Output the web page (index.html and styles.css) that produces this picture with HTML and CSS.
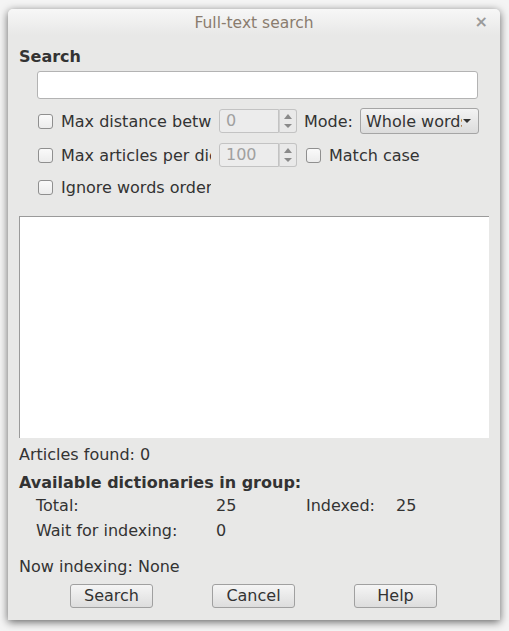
FILE: index.html
```html
<!DOCTYPE html>
<html>
<head>
<meta charset="utf-8">
<link rel="stylesheet" href="styles.css">
</head>
<body>
<div class="window">
  <div class="titlebar">
    <span class="title">Full-text search</span>
    <span class="close">×</span>
  </div>
  <div class="content">
    <div class="heading">Search</div>
    <div class="search-input"></div>
    <div class="options">
      <label class="check"><span class="box"></span><span class="clip">Max distance between words</span></label>
      <div class="spin"><span class="spin-field">0</span><span class="spin-arrows"><span class="up"></span><span class="down"></span></span></div>
      <div class="mode"><span>Mode:</span><span class="combo"><span class="combo-text">Whole words</span><span class="caret"></span></span></div>

      <label class="check"><span class="box"></span><span class="clip">Max articles per dictionary</span></label>
      <div class="spin"><span class="spin-field">100</span><span class="spin-arrows"><span class="up"></span><span class="down"></span></span></div>
      <label class="check match"><span class="box"></span><span>Match case</span></label>

      <label class="check"><span class="box"></span><span class="clip">Ignore words order</span></label>
    </div>
    <div class="results"></div>
    <div class="line found">Articles found: 0</div>
    <div class="line heading2">Available dictionaries in group:</div>
    <div class="stats">
      <span>Total:</span><span>25</span><span>Indexed:</span><span>25</span>
      <span>Wait for indexing:</span><span>0</span><span></span><span></span>
    </div>
    <div class="line now">Now indexing: None</div>
    <div class="buttons">
      <button class="btn">Search</button>
      <button class="btn">Cancel</button>
      <button class="btn">Help</button>
    </div>
  </div>
</div>
</body>
</html>
```
FILE: styles.css
```css
html, body {
  margin: 0;
  padding: 0;
  background: #f4f4f4;
}
body {
  width: 509px;
  height: 631px;
  overflow: hidden;
  font-family: "DejaVu Sans", sans-serif;
  font-size: 16px;
  color: #333333;
}
.window {
  margin: 9px 0 0 8px;
  width: 492px;
  height: 611px;
  background: #e8e8e7;
  border-radius: 5px 5px 0 0;
  box-shadow: 0 2px 9px rgba(0, 0, 0, 0.6);
  display: flex;
  flex-direction: column;
}
.titlebar {
  height: 26px;
  border-radius: 5px 5px 0 0;
  background: linear-gradient(#f7f7f7, #e8e8e7);
  display: flex;
  align-items: center;
  justify-content: center;
  position: relative;
}
.title {
  color: #8a7c6e;
  font-size: 15.5px;
  padding-top: 1px;
}
.close {
  position: absolute;
  right: 12px;
  top: 3px;
  font-size: 16px;
  font-weight: bold;
  color: #9a9a9a;
}
.content {
  padding: 0 11px;
  display: flex;
  flex-direction: column;
}
.heading {
  font-weight: bold;
  height: 20px;
  line-height: 20px;
  margin-top: 12px;
}
.search-input {
  margin: 4px 11px 0 18px;
  height: 26px;
  background: #fff;
  border: 1px solid #b3b3b3;
  border-radius: 3px;
}
.options {
  display: grid;
  grid-template-columns: 174px 78px auto;
  column-gap: 8px;
  row-gap: 8px;
  grid-template-rows: 26px 26px 22px;
  margin: 9px 0 0 18px;
  align-items: center;
}
.check {
  display: flex;
  align-items: center;
  gap: 8px;
  white-space: nowrap;
  overflow: hidden;
  height: 26px;
}
.box {
  flex: none;
  width: 13px;
  height: 13px;
  margin-left: 1px;
  border: 1px solid #8f8f8f;
  border-radius: 3px;
  background: linear-gradient(#fafafa, #ececec);
}
.clip {
  overflow: hidden;
  white-space: nowrap;
}
.spin {
  display: flex;
  height: 24px;
}
.spin-field {
  width: 52px;
  border: 1px solid #c3c3c3;
  border-radius: 3px 0 0 3px;
  background: #ececec;
  color: #a0a0a0;
  line-height: 22px;
  padding-left: 6px;
}
.spin-arrows {
  width: 16px;
  border: 1px solid #c3c3c3;
  border-left: 1px solid #d0d0d0;
  border-radius: 0 3px 3px 0;
  background: #e9e9e9;
  display: flex;
  flex-direction: column;
  align-items: center;
  justify-content: space-around;
  padding: 2px 0;
}
.up {
  width: 0;
  height: 0;
  border-left: 4px solid transparent;
  border-right: 4px solid transparent;
  border-bottom: 5px solid #8a8a8a;
}
.down {
  width: 0;
  height: 0;
  border-left: 4px solid transparent;
  border-right: 4px solid transparent;
  border-top: 4px solid #8a8a8a;
}
.mode {
  display: flex;
  align-items: center;
  gap: 7px;
  margin-left: -1px;
}
.combo {
  width: 119px;
  height: 26px;
  box-sizing: border-box;
  border: 1px solid #a5a5a5;
  border-radius: 3px;
  background: linear-gradient(#f3f3f3, #dcdcdc);
  display: flex;
  align-items: center;
  padding-left: 5px;
}
.combo-text {
  width: 96px;
  overflow: hidden;
  white-space: nowrap;
}
.caret {
  width: 0;
  height: 0;
  border-left: 4px solid transparent;
  border-right: 4px solid transparent;
  border-top: 4px solid #333;
  margin-left: 1px;
}
.results {
  margin-top: 18px;
  height: 221px;
  background: #fff;
  border-top: 1px solid #9a9a9a;
  border-left: 1px solid #9a9a9a;
}
.line {
  height: 20px;
  line-height: 20px;
}
.found {
  margin-top: 7px;
}
.heading2 {
  margin-top: 8px;
  font-weight: bold;
}
.stats {
  display: grid;
  grid-template-columns: 180px 90px 90px auto;
  grid-auto-rows: 20px;
  row-gap: 5px;
  line-height: 20px;
  margin: 3px 0 0 17px;
}
.now {
  margin-top: 16px;
}
.buttons {
  display: flex;
  justify-content: center;
  gap: 59px;
  margin-top: 7px;
  padding-right: 1px;
}
.btn {
  width: 83px;
  height: 24px;
  font-family: "DejaVu Sans", sans-serif;
  font-size: 16px;
  color: #333;
  border: 1px solid #a0a0a0;
  border-radius: 3px;
  background: linear-gradient(#f5f5f5, #dddddd);
  padding: 0;
  line-height: 20px;
}
```
